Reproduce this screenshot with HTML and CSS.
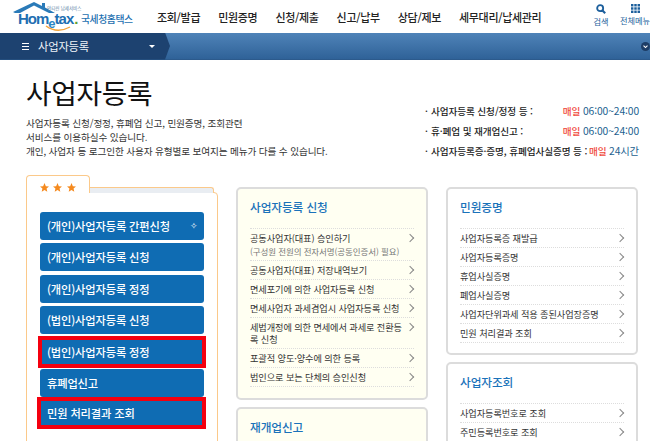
FILE: index.html
```html
<!DOCTYPE html>
<html lang="ko">
<head>
<meta charset="utf-8">
<title>사업자등록</title>
<link rel="stylesheet" href="styles.css">
</head>
<body>
<div class="page">
  <header class="top">
    <div class="logo">
      <svg class="roof" width="46" height="13" viewBox="0 0 46 13"><path d="M0 10 L21 0 L29 4 L29 1 L32 1 L32 5.5 L42 11 L36 11 L21 3.5 L7 11 L2 11 Z" fill="#2a7ab8"/></svg>
      <svg class="smile" width="26" height="8" viewBox="0 0 26 8"><path d="M1 1 Q12 9 25 2" fill="none" stroke="#f2a33a" stroke-width="1.4"/></svg>
      <span class="logo-small">안티씬 납세서비스</span>
      <span class="logo-word">Hom<i>e</i>tax<b>.</b></span>
      <span class="logo-kr">국세청홈택스</span>
    </div>
    <nav class="gnb">
      <a>조회/발급</a><a>민원증명</a><a>신청/제출</a><a>신고/납부</a><a>상담/제보</a><a>세무대리/납세관리</a>
    </nav>
    <div class="tools">
      <div class="tool">
        <svg width="10" height="10" viewBox="0 0 12 12"><circle cx="5" cy="5" r="3.6" fill="none" stroke="#1c5f9c" stroke-width="2.2"/><path d="M7.5 7.5 L11 11" stroke="#1c5f9c" stroke-width="2.6"/></svg>
        <span>검색</span>
      </div>
      <div class="tool tool-all">
        <svg width="9" height="9" viewBox="0 0 11 11" fill="#1c5f9c"><rect width="3" height="3"/><rect x="4" width="3" height="3"/><rect x="8" width="3" height="3"/><rect y="4" width="3" height="3"/><rect x="4" y="4" width="3" height="3"/><rect x="8" y="4" width="3" height="3"/><rect y="8" width="3" height="3"/><rect x="4" y="8" width="3" height="3"/><rect x="8" y="8" width="3" height="3"/></svg>
        <span>전체메뉴</span>
      </div>
    </div>
  </header>
  <div class="crumb">
    <div class="crumb-cur">
      <span class="burger"><i></i><i></i><i></i></span>
      <span class="crumb-text">사업자등록</span>
      <span class="caret"></span>
    </div>
    <span class="crumb-more"><svg width="9" height="9" viewBox="0 0 10 10"><circle cx="5" cy="5" r="5" fill="#1d3d66"/><path d="M2.8 4 L5 6.2 L7.2 4" fill="none" stroke="#fff" stroke-width="1.2"/></svg></span>
  </div>
  <section class="intro">
    <div class="intro-left">
      <h1>사업자등록</h1>
      <p>사업자등록 신청/정정, 휴폐업 신고, 민원증명, 조회관련<br>서비스를 이용하실수 있습니다.<br>개인, 사업자 등 로그인한 사용자 유형별로 보여지는 메뉴가 다를 수 있습니다.</p>
    </div>
    <ul class="hours">
      <li><span>사업자등록 신청/정정 등 :</span><span><em>매일</em> <b>06:00~24:00</b></span></li>
      <li><span>휴·폐업 및 재개업신고 :</span><span><em>매일</em> <b>06:00~24:00</b></span></li>
      <li><span>사업자등록증·증명, 휴폐업사실증명 등 :</span><span><em>매일</em> <b>24시간</b></span></li>
    </ul>
  </section>
  <main class="cols">
    <div class="fav">
      <div class="fav-tabs">
        <div class="fav-tab">
          <svg width="9" height="9" viewBox="0 0 20 20"><path d="M10 0 L13 7 L20 7.6 L14.6 12.2 L16.2 19.5 L10 15.6 L3.8 19.5 L5.4 12.2 L0 7.6 L7 7 Z" fill="#f58a1f"/></svg>
          <svg width="9" height="9" viewBox="0 0 20 20"><path d="M10 0 L13 7 L20 7.6 L14.6 12.2 L16.2 19.5 L10 15.6 L3.8 19.5 L5.4 12.2 L0 7.6 L7 7 Z" fill="#f58a1f"/></svg>
          <svg width="9" height="9" viewBox="0 0 20 20"><path d="M10 0 L13 7 L20 7.6 L14.6 12.2 L16.2 19.5 L10 15.6 L3.8 19.5 L5.4 12.2 L0 7.6 L7 7 Z" fill="#f58a1f"/></svg>
        </div>
        <div class="fav-back"></div>
      </div>
      <div class="fav-body">
        <a class="btn">(개인)사업자등록 간편신청<span class="plus">✧</span></a>
        <a class="btn">(개인)사업자등록 신청</a>
        <a class="btn">(개인)사업자등록 정정</a>
        <a class="btn">(법인)사업자등록 신청</a>
        <a class="btn mark">(법인)사업자등록 정정</a>
        <a class="btn">휴폐업신고</a>
        <a class="btn mark mark-wide">민원 처리결과 조회</a>
      </div>
    </div>
    <div class="col">
      <div class="card card-a cream">
        <h2>사업자등록 신청</h2>
        <ul>
          <li class="two"><span>공동사업자(대표) 승인하기<small>(구성원 전원의 전자서명(공동인증서) 필요)</small></span></li>
          <li><span>공동사업자(대표) 저장내역보기</span></li>
          <li><span>면세포기에 의한 사업자등록 신청</span></li>
          <li><span>면세사업자 과세겸업시 사업자등록 신청</span></li>
          <li><span>세법개정에 의한 면세에서 과세로 전환등록 신청</span></li>
          <li><span>포괄적 양도·양수에 의한 등록</span></li>
          <li><span>법인으로 보는 단체의 승인신청</span></li>
        </ul>
      </div>
      <div class="card cream">
        <h2>재개업신고</h2>
      </div>
    </div>
    <div class="col">
      <div class="card card-b">
        <h2>민원증명</h2>
        <ul>
          <li><span>사업자등록증 재발급</span></li>
          <li><span>사업자등록증명</span></li>
          <li><span>휴업사실증명</span></li>
          <li><span>폐업사실증명</span></li>
          <li><span>사업자단위과세 적용 종된사업장증명</span></li>
          <li><span>민원 처리결과 조회</span></li>
        </ul>
      </div>
      <div class="card">
        <h2>사업자조회</h2>
        <ul>
          <li><span>사업자등록번호로 조회</span></li>
          <li><span>주민등록번호로 조회</span></li>
        </ul>
      </div>
    </div>
  </main>
</div>
</body>
</html>
```
FILE: styles.css
```css
* { box-sizing: border-box; }
html, body { margin: 0; padding: 0; }
body { background: #fff; font-family: "Noto Sans CJK KR", "Liberation Sans", sans-serif; color: #222; }
.page { width: 650px; height: 441px; overflow: hidden; }
ul { list-style: none; margin: 0; padding: 0; }

.top { height: 33px; display: flex; align-items: flex-start; }
.logo { position: relative; width: 157px; height: 33px; flex: none; }
.roof { position: absolute; left: 13px; top: 2px; }
.smile { position: absolute; left: 45px; top: 25px; }
.logo-small { position: absolute; left: 47px; top: 6px; font-size: 4.5px; line-height: 5px; color: #5a7f9f; white-space: nowrap; }
.logo-word { position: absolute; left: 18px; top: 11px; font: bold 15px/16px "Liberation Sans", sans-serif; color: #1f6fb2; letter-spacing: -1px; white-space: nowrap; }
.logo-word i { font-style: normal; color: #2a86c4; position: relative; top: 4px; font-size: 13px; }
.logo-word b { color: #5f9e2f; margin-left: 1px; }
.logo-kr { position: absolute; left: 81px; top: 12px; font-size: 9.8px; line-height: 14px; font-weight: 500; color: #1c6fb0; letter-spacing: -.4px; white-space: nowrap; }
.gnb { display: flex; gap: 18px; padding-top: 9px; width: 436px; flex: none; white-space: nowrap; }
.gnb a { font-size: 11px; line-height: 16px; font-weight: 500; color: #222; letter-spacing: -.32px; }
.tools { display: flex; flex: none; gap: 9px; padding-top: 4px; }
.tool { display: flex; flex-direction: column; align-items: center; font-size: 8.2px; line-height: 11px; color: #1c5f9c; white-space: nowrap; gap: 2px; width: 16px; }
.tool-all { width: 34px; }

.crumb { height: 27px; background: linear-gradient(#4f83b8, #2f6298); display: flex; justify-content: space-between; align-items: center; border-bottom: 1px solid #2c5a8c; }
.crumb-cur { width: 170px; height: 27px; background: #1d4270; clip-path: polygon(0 0, 165px 0, 170px 50%, 165px 100%, 0 100%); display: flex; align-items: center; padding-left: 22px; color: #eef3f8; }
.burger { display: flex; flex-direction: column; gap: 2px; width: 7px; margin-right: 9px; }
.burger i { height: 1px; background: #fff; display: block; }
.crumb-text { font-size: 11.3px; line-height: 14px; letter-spacing: -.2px; }
.caret { margin-left: 60px; border: 3px solid transparent; border-top: 3px solid #fff; border-bottom: 0; }
.crumb-more { display: flex; }

.intro { display: flex; justify-content: space-between; height: 115px; padding-left: 26px; }
.intro-left h1 { margin: 13px 0 0; font-size: 27.8px; line-height: 38px; font-weight: 400; color: #111; letter-spacing: -.3px; }
.intro-left p { margin: 5px 0 0; font-size: 9.65px; line-height: 14px; color: #333; letter-spacing: -.12px; white-space: nowrap; }
.hours { width: 214px; margin: 41px 11px 0 0; flex: none; }
.hours li { display: flex; justify-content: space-between; font-size: 9.65px; line-height: 20px; color: #222; white-space: nowrap; padding-left: 6px; position: relative; font-weight: 500; letter-spacing: -.1px; }
.hours li::before { content: "·"; position: absolute; left: 0; }
.hours em { font-style: normal; color: #f0483a; }
.hours b { font-weight: 400; color: #1c5f8f; font-size: 10.3px; }

.cols { display: flex; align-items: flex-start; padding-left: 26px; }
.fav { width: 192px; margin-right: 18px; flex: none; }
.fav-tabs { display: flex; height: 18px; align-items: flex-end; position: relative; z-index: 1; margin-bottom: -1px; }
.fav-tab { width: 64px; height: 18px; background: #fff; border: 1px solid #fbc98a; border-bottom: 0; border-radius: 4px 4px 0 0; display: flex; gap: 4.3px; padding: 7px 0 0 13px; }
.fav-back { width: 124px; height: 6px; background: #e9edf2; border: 1px solid #fbc98a; border-left: 0; border-bottom: 0; border-radius: 0 3px 0 0; }
.fav-body { border: 1px solid #fbc98a; border-radius: 0 4px 0 0; padding: 19px 13px 0; display: flex; flex-direction: column; gap: 3.4px; height: 260px; background: #fff; }
.btn { height: 28px; background: #0f6cb3; border-radius: 3px; color: #fff; font-size: 11.25px; line-height: 28px; font-weight: 500; padding-left: 7px; letter-spacing: -.15px; position: relative; flex: none; white-space: nowrap; }
.plus { position: absolute; right: 6px; top: 0; font-size: 9px; }
.mark { outline: 4px solid #f4000f; outline-offset: -2px; border-radius: 0; }
.mark-wide { margin: -1px 0 0 -1px; padding-left: 8px; }

.col { width: 192px; margin-right: 18px; flex: none; padding-top: 12px; display: flex; flex-direction: column; gap: 7px; }
.card { border: 2px solid #dcdcdc; border-radius: 5px; background: #fff; padding: 0 12px; min-height: 100px; }
.cream { background: #fffff2; }
.card-a { height: 213px; }
.card-b { height: 168px; }
.card h2 { margin: 0; font-size: 11.7px; line-height: 16px; font-weight: 500; color: #1a72ba; padding: 10px 0 13px; letter-spacing: -.1px; }
.card ul { border-top: 1px dotted #ddd; }
.card li { border-bottom: 1px dotted #ddd; padding: 3px 10px 3px 0; font-size: 9.2px; line-height: 12px; color: #333; position: relative; letter-spacing: -.1px; }
.card li.two { padding-bottom: 2px; }
.card li::after { content: ""; position: absolute; right: 1px; top: 6px; width: 5px; height: 5px; border-top: 1px solid #888; border-right: 1px solid #888; transform: rotate(45deg); }
.card small { display: block; font-size: 8.5px; color: #777; line-height: 14px; white-space: nowrap; }
```
